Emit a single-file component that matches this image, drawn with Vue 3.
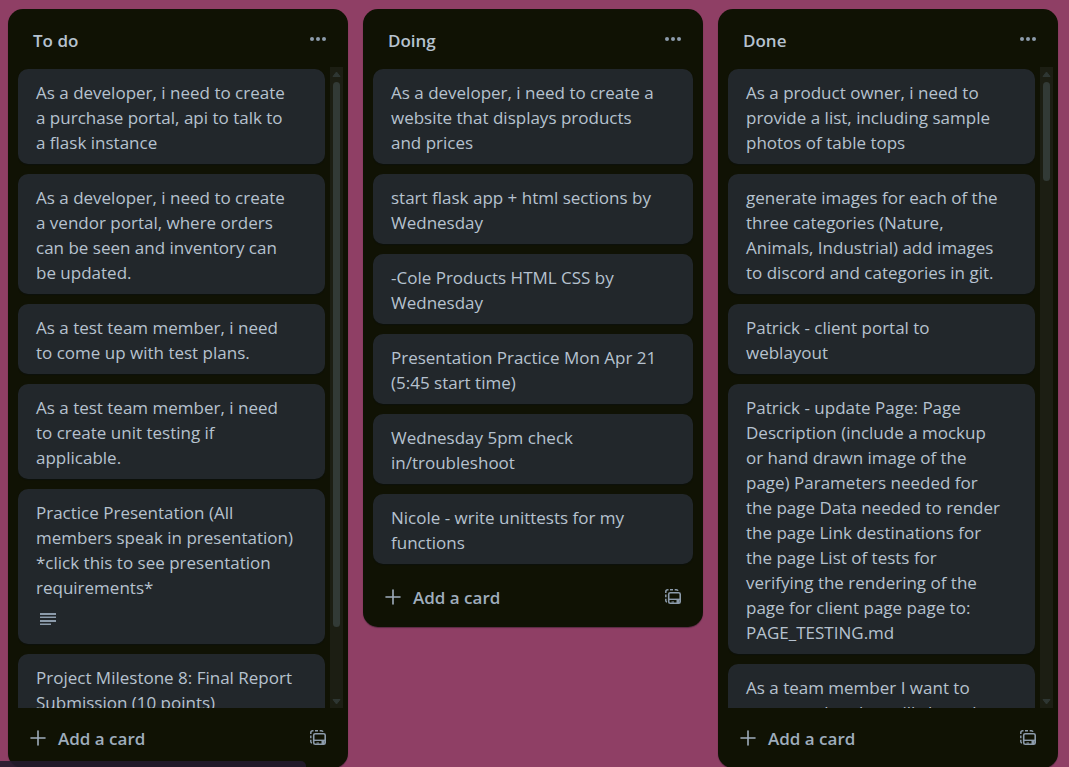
<script setup>
const lists = [
  {
    title: 'To do',
    thumb: 89.2,
    cards: [
      { text: 'As a developer, i need to create\na purchase portal, api to talk to\na flask instance' },
      { text: 'As a developer, i need to create\na vendor portal, where orders\ncan be seen and inventory can\nbe updated.' },
      { text: 'As a test team member, i need\nto come up with test plans.' },
      { text: 'As a test team member, i need\nto create unit testing if\napplicable.' },
      { text: 'Practice Presentation (All\nmembers speak in presentation)\n*click this to see presentation\nrequirements*', description: true },
      { text: 'Project Milestone 8: Final Report\nSubmission (10 points)' },
    ],
  },
  {
    title: 'Doing',
    thumb: 0,
    cards: [
      { text: 'As a developer, i need to create a\nwebsite that displays products\nand prices' },
      { text: 'start flask app + html sections by\nWednesday' },
      { text: '-Cole Products HTML CSS by\nWednesday' },
      { text: 'Presentation Practice Mon Apr 21\n(5:45 start time)' },
      { text: 'Wednesday 5pm check\nin/troubleshoot' },
      { text: 'Nicole - write unittests for my\nfunctions' },
    ],
  },
  {
    title: 'Done',
    thumb: 16.2,
    cards: [
      { text: 'As a product owner, i need to\nprovide a list, including sample\nphotos of table tops' },
      { text: 'generate images for each of the\nthree categories (Nature,\nAnimals, Industrial) add images\nto discord and categories in git.' },
      { text: 'Patrick - client portal to\nweblayout' },
      { text: 'Patrick - update Page: Page\nDescription (include a mockup\nor hand drawn image of the\npage) Parameters needed for\nthe page Data needed to render\nthe page Link destinations for\nthe page List of tests for\nverifying the rendering of the\npage for client page page to:\nPAGE_TESTING.md' },
      { text: 'As a team member I want to\ncreate a plan that will show the' },
    ],
  },
]
</script>

<template>
  <main class="board">
    <section v-for="list in lists" :key="list.title" class="list">
      <header class="list-header">
        <h2>{{ list.title }}</h2>
        <button class="icon-button" type="button" aria-label="List actions">
          <svg width="20" height="20" viewBox="0 0 20 20" fill="currentColor">
            <circle cx="4" cy="10" r="2" /><circle cx="10" cy="10" r="2" /><circle cx="16" cy="10" r="2" />
          </svg>
        </button>
      </header>

      <div class="list-body">
        <ol class="cards" :class="{ fitted: !list.thumb }">
          <li v-for="card in list.cards" :key="card.text" class="card">
            <a href="#">{{ card.text }}</a>
            <div v-if="card.description" class="badges">
              <svg width="16" height="13" viewBox="0 0 16 13" fill="currentColor" role="img" aria-label="Has description">
                <path d="M0 0h16v2H0zM0 3.500h16v1.500H0zM0 7h16v2H0zM0 10.500h11v1.500H0z" />
              </svg>
            </div>
          </li>
        </ol>
        <div v-if="list.thumb" class="scrollbar" aria-hidden="true">
          <svg width="13" height="15" viewBox="0 0 13 15"><path d="M6.500 5 10 9.500H3z" fill="currentColor" stroke="currentColor" stroke-linejoin="round" /></svg>
          <div class="track"><div class="thumb" :style="{ height: list.thumb + '%' }"></div></div>
          <svg width="13" height="15" viewBox="0 0 13 15"><path d="M6.500 11 10 6.500H3z" fill="currentColor" stroke="currentColor" stroke-linejoin="round" /></svg>
        </div>
      </div>

      <footer class="list-footer">
        <button class="add" type="button">
          <svg width="16" height="16" viewBox="0 0 16 16" fill="none" stroke="currentColor" stroke-width="1.600" stroke-linecap="round">
            <path d="M8 1v14M1 8h14" />
          </svg>
          Add a card
        </button>
        <button class="icon-button" type="button" aria-label="Create from template">
          <svg width="16" height="16" viewBox="0 0 16 16" fill="none" stroke="currentColor">
            <path d="M.8 4V2.800Q.8.800 2.800.800h.7M5 .8h3M9.700.8h1.600q1.400 0 1.700 1M.8 5.500v2.700M.8 9.700v1.700q0 1.300 1.200 1.500" stroke-width="1.500" />
            <rect x="3.700" y="3.700" width="11.500" height="10.600" rx="1.600" stroke-width="1.600" />
            <path d="M4 10.300h11" stroke-width="1.400" />
            <path d="M6.500 13.500v-1h2.500v1zM11.500 10h3v4h-3z" fill="currentColor" stroke="none" />
          </svg>
        </button>
      </footer>
    </section>
    <div class="status"></div>
  </main>
</template>

<style>
body {
  margin: 0;
  background: #8f3f65;
}
</style>

<style scoped>
.board {
  display: grid;
  grid-template-columns: repeat(3, 1fr);
  align-items: start;
  gap: 15px;
  box-sizing: border-box;
  height: 100vh;
  padding: 9px 11px 0 8px;
  overflow: hidden;
  font-family: "Segoe UI", "Open Sans", "Noto Sans", sans-serif;
  font-size: 17px;
  line-height: 25px;
  color: #b6c2cf;
}
.list {
  display: flex;
  flex-direction: column;
  max-height: calc(100vh - 8px);
  border-radius: 15px;
  background: #101204;
  box-shadow: 0 1px 1px #09101466;
}
.list-header {
  display: flex;
  flex: none;
  align-items: center;
  justify-content: space-between;
  height: 58px;
  padding: 0 20px 0 25px;
}
h2 {
  margin: 0;
  padding-top: 5px;
  font-size: 17px;
  font-weight: 600;
}
button {
  display: flex;
  align-items: center;
  padding: 0;
  border: 0;
  background: none;
  font: inherit;
  color: #8c9bab;
}
.list-header svg {
  padding-top: 2px;
}
.list-body {
  display: flex;
  flex: 0 1 auto;
  gap: 5px;
  min-height: 0;
  padding: 0 5px 0 10px;
}
.cards {
  display: flex;
  flex: 1;
  flex-direction: column;
  gap: 10px;
  min-width: 0;
  margin: 0;
  padding: 2px 0;
  overflow: hidden;
  list-style: none;
}
.cards.fitted {
  padding: 2px 5px 3px 0;
}
.card {
  flex: none;
  padding: 11px 18px 9px;
  border-radius: 10px;
  background: #22272b;
  box-shadow: 0 1px 1px #09101480;
}
.card a {
  display: block;
  white-space: pre;
  color: inherit;
  text-decoration: none;
}
.badges {
  display: flex;
  align-items: center;
  height: 35px;
  padding: 0 4px;
  color: #8c9bab;
}
.badges svg {
  padding-top: 3px;
}
.scrollbar {
  display: flex;
  flex: none;
  flex-direction: column;
  width: 13px;
  background: #1c1e13;
  color: #2e3632;
}
.track {
  flex: 1;
  padding: 0 3px;
}
.thumb {
  border-radius: 4px;
  background: #323a36;
}
.list-footer {
  display: flex;
  flex: none;
  align-items: center;
  justify-content: space-between;
  height: 60px;
  padding: 0 22px;
}
.add {
  gap: 12px;
  font-weight: 600;
  color: #9fadbc;
}
.status {
  position: fixed;
  bottom: 0;
  left: 0;
  width: 306px;
  height: 6px;
  border-radius: 0 5px 0 0;
  background: #251c2ee6;
}
</style>
